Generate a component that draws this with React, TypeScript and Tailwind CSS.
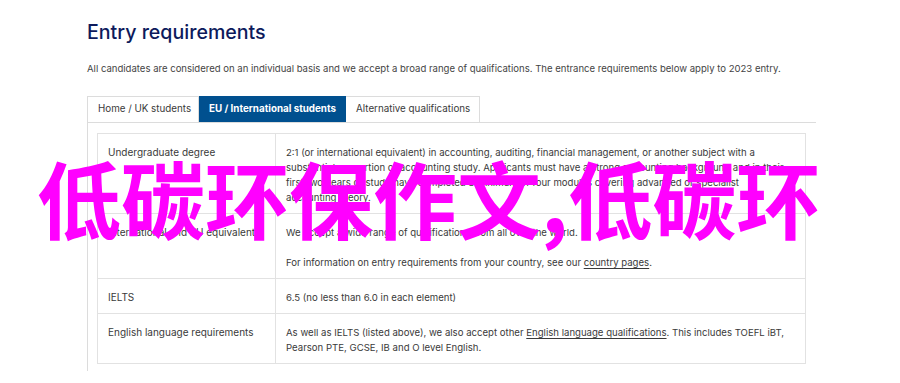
const rows = [
  {
    label: "Undergraduate degree",
    body: [
      [
        "2:1 (or international equivalent) in accounting, auditing, financial management, or another subject with a",
        "substantial proportion of accounting study. Applicants must have a strong accounting background and in their",
        "first two years of study have completed a minimum of four modules covering advanced or specialist",
        "accounting theory.",
      ],
    ],
  },
  {
    label: "International and EU equivalents",
    body: [["We accept a wide range of qualifications from all over the world."], ["__country"]],
  },
  {
    label: "IELTS",
    body: [["6.5 (no less than 6.0 in each element)"]],
  },
  {
    label: "English language requirements",
    body: [["__english", "Pearson PTE, GCSE, IB and O level English."]],
  },
];

const Line = ({ text }: { text: string }) => {
  if (text === "__country")
    return (
      <span className="block">
        For information on entry requirements from your country, see our{" "}
        <span className="underline underline-offset-2">country pages</span>.
      </span>
    );
  if (text === "__english")
    return (
      <span className="block">
        As well as IELTS (listed above), we also accept other{" "}
        <span className="underline underline-offset-2">English language qualifications</span>. This includes TOEFL iBT,
      </span>
    );
  return <span className="block">{text}</span>;
};

export default function App() {
  return (
    <div className="relative w-[900px] h-[383px] overflow-hidden bg-white font-['Inter',sans-serif] text-[#3a3a3a]">
      <div className="pl-[87px] pt-[18px]">
        <h1 className="text-[19.6px] leading-[28px] font-medium text-[#0d1a5c]">Entry requirements</h1>
        <p className="mt-[16px] text-[9.55px] leading-[14px] text-[#444] whitespace-nowrap">
          All candidates are considered on an individual basis and we accept a broad range of qualifications. The entrance requirements below apply to 2023 entry.
        </p>

        <div className="mt-[20px] flex h-[26px] text-[9.8px] whitespace-nowrap">
          <div className="flex items-center px-[10px] w-[112px] border-t border-l border-r border-[#dcdcdc]">Home / UK students</div>
          <div className="flex items-center justify-center w-[147px] bg-[#00508f] text-white font-bold">EU / International students</div>
          <div className="flex items-center px-[10px] w-[134px] border-t border-r border-[#dcdcdc]">Alternative qualifications</div>
        </div>

        <div className="w-[729px] border-t border-l border-[#dcdcdc] pl-[9px] pr-[10px] pt-[10px] pb-[7px]">
          <div className="border border-[#e2e2e2] text-[9.6px] leading-[15px]">
            {rows.map((r, i) => (
              <div key={i} className={`flex ${i > 0 ? "border-t border-[#e2e2e2]" : ""}`}>
                <div className="w-[178px] shrink-0 pl-[10px] pt-[11px] pb-[8px] border-r border-[#e2e2e2] text-[10px]">{r.label}</div>
                <div className="flex-1 pl-[10px] pt-[11px] pb-[8px] whitespace-nowrap">
                  {r.body.map((para, j) => (
                    <div key={j} className={j > 0 ? "mt-[15px]" : ""}>
                      {para.map((t, k) => (
                        <Line key={k} text={t} />
                      ))}
                    </div>
                  ))}
                </div>
              </div>
            ))}
          </div>
        </div>
      </div>

      <div className="absolute left-[37px] top-[155px] text-[84px] leading-none font-bold text-[#ff00ff] whitespace-nowrap font-['Noto_Sans_CJK_SC',sans-serif]">
        低碳环保作文,低碳环
      </div>
    </div>
  );
}
